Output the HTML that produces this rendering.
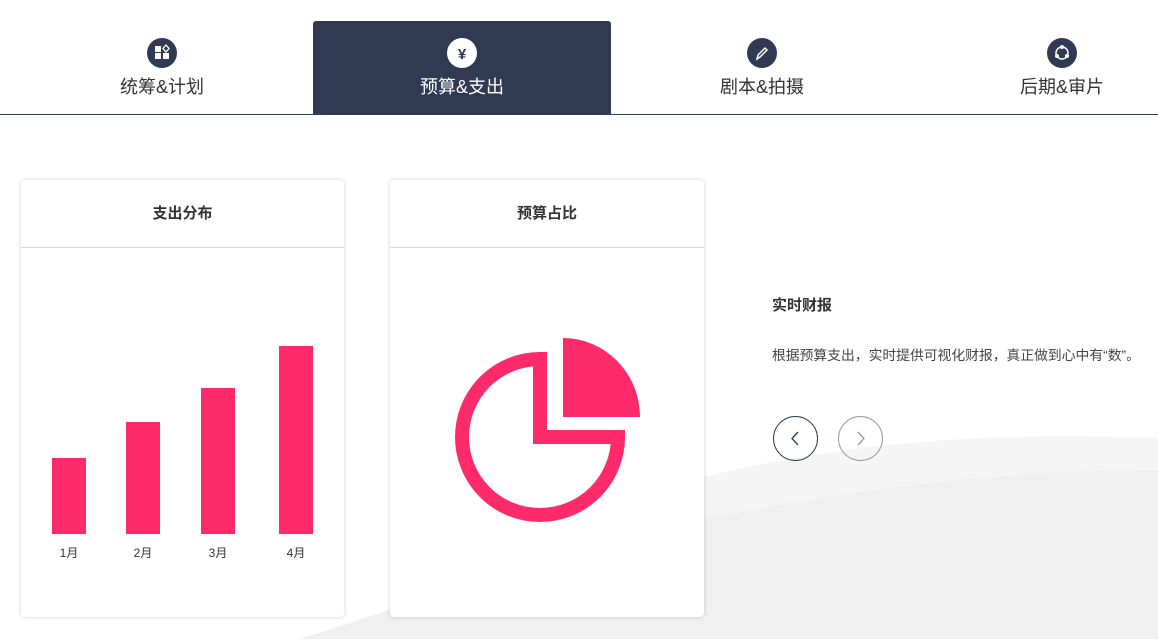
<!DOCTYPE html>
<html><head><meta charset="utf-8"><style>
*{margin:0;padding:0;box-sizing:border-box}
body{width:1158px;height:639px;overflow:hidden;background:#fff;font-family:"Liberation Sans","Noto Sans CJK SC",sans-serif;position:relative;color:#333}
.bg{position:absolute;left:0;top:0}
.tab{position:absolute;top:21px;width:298px;height:94px;text-align:center}
.tab .ic{position:absolute;left:134px;top:17px;width:30px;height:30px;border-radius:50%;background:#303a52}
.tab .lb{position:absolute;left:0;right:0;top:54px;font-size:18px;line-height:24px;color:#333}
.tab.act{background:#303a52;border-radius:3px 3px 0 0}
.tab.act .ic{background:#fff}
.tab.act .lb{color:#fff}
.line{position:absolute;left:0;top:114px;width:1158px;height:1px;background:#303a52}
.card{position:absolute;top:180px;height:437px;background:#fff;border-radius:4px;box-shadow:0 0 5px rgba(0,0,0,.18)}
.card h3{height:68px;line-height:68px;text-align:center;font-size:15px;font-weight:bold;color:#333;border-bottom:1px solid #d8d8d8}
.bar{position:absolute;width:34px;background:#ff2a6a}
.ml{position:absolute;top:364px;font-size:12px;color:#333;width:40px;text-align:center}
.btn{position:absolute;top:416px;width:45px;height:45px;border-radius:50%;border:1px solid #303a52}
</style></head><body>
<svg class="bg" width="1158" height="639"><path d="M700,478 C850,440 1000,432 1158,438 L1158,639 L700,639 Z" fill="#f5f5f6"/><path d="M700,520 C850,490 1000,470 1158,470 L1158,639 L300,639 C450,590 600,540 700,520Z" fill="#f0f0f1"/></svg>
<div class="line"></div>
<div class="tab" style="left:13px"><div class="ic"><svg width="30" height="30"><rect x="8" y="15" width="6" height="6" fill="#fff"/><rect x="16" y="15" width="6" height="6" fill="#fff"/><rect x="8" y="8" width="6" height="6" fill="#fff"/><path d="M19,7 L22,10.5 L19,14 L16,10.5Z" fill="none" stroke="#fff" stroke-width="1.3"/></svg></div><div class="lb">统筹&amp;计划</div></div>
<div class="tab act" style="left:313px"><div class="ic"><svg width="30" height="30"><text x="15" y="21" text-anchor="middle" font-size="15" font-weight="bold" fill="#303a52" font-family="Liberation Sans,sans-serif">¥</text></svg></div><div class="lb">预算&amp;支出</div></div>
<div class="tab" style="left:613px"><div class="ic"><svg width="30" height="30"><path d="M10,21 L11,17 L18,10 L20,12 L13,19 Z" fill="none" stroke="#fff" stroke-width="1.5"/></svg></div><div class="lb">剧本&amp;拍摄</div></div>
<div class="tab" style="left:913px"><div class="ic"><svg width="30" height="30"><circle cx="15" cy="15" r="6" fill="none" stroke="#fff" stroke-width="1.5"/><circle cx="15" cy="9" r="2" fill="#fff"/><circle cx="10" cy="18" r="2" fill="#fff"/><circle cx="20" cy="18" r="2" fill="#fff"/></svg></div><div class="lb">后期&amp;审片</div></div>

<div class="card" style="left:21px;width:323px"><h3>支出分布</h3>
<div class="bar" style="left:31px;top:278px;height:76px"></div>
<div class="bar" style="left:105px;top:242px;height:112px"></div>
<div class="bar" style="left:180px;top:208px;height:146px"></div>
<div class="bar" style="left:258px;top:166px;height:188px"></div>
<div class="ml" style="left:28px">1月</div><div class="ml" style="left:102px">2月</div><div class="ml" style="left:177px">3月</div><div class="ml" style="left:255px">4月</div>
</div>
<div class="card" style="left:390px;width:314px"><h3>预算占比</h3></div>
<svg style="position:absolute;left:0;top:0" width="1158" height="639"><path d="M540,359 A78,78 0 1 0 618,437 L540,437 Z" fill="none" stroke="#ff2a6a" stroke-width="14" stroke-linejoin="miter"/><path d="M563,417 L563,338 A77,79 0 0 1 640,417 Z" fill="#ff2a6a"/></svg>
<div style="position:absolute;left:772px;top:294px;font-size:15px;font-weight:bold;color:#333">实时财报</div>
<div style="position:absolute;left:772px;top:344px;font-size:13.8px;color:#444;white-space:nowrap">根据预算支出，实时提供可视化财报，真正做到心中有“数”。</div>
<div class="btn" style="left:773px"><svg width="43" height="43"><path d="M24,15 L18,21.5 L24,28" fill="none" stroke="#303a52" stroke-width="1.3"/></svg></div>
<div class="btn" style="left:838px;border-color:#999"><svg width="43" height="43"><path d="M19,15 L25,21.5 L19,28" fill="none" stroke="#999" stroke-width="1.3"/></svg></div>
</body></html>
